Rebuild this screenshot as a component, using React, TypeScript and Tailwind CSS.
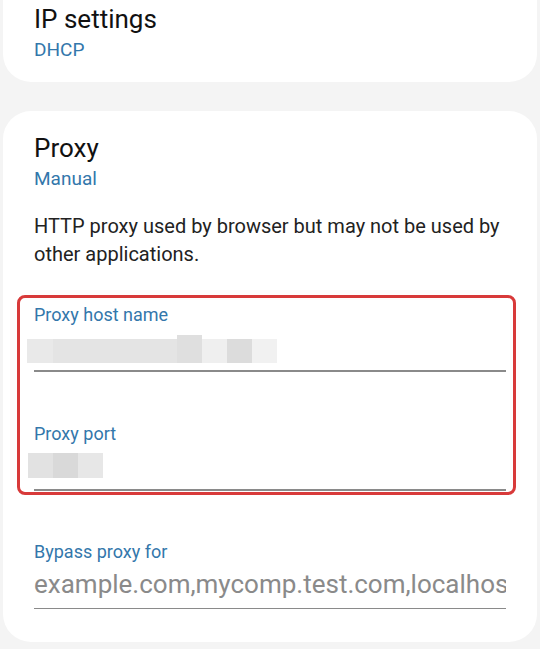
const hostCells = [
    'w-[25.5px] h-[24px] bg-[#e9e9e9]',
    'w-[124px] h-[24px] bg-[#e4e4e4]',
    'w-[25px] h-[28px] bg-[#dfdfdf]',
    'w-[25px] h-[24px] bg-[#efefef]',
    'w-[25px] h-[24px] bg-[#dcdcdc]',
    'w-[25px] h-[24px] bg-[#f1f1f1]',
];

const portCells = [
    'w-[25px] h-[25px] bg-[#e2e2e2]',
    'w-[25px] h-[25px] bg-[#d9d9d9]',
    'w-[25px] h-[25px] bg-[#e7e7e7]',
];

const FieldLabel = ({ children }: { children: string }) => (
    <div className="text-[18px] leading-[22px] text-[#3377ab]">{children}</div>
);

const Underline = () => <div className="h-[1.5px] bg-[#8a8a8a]" />;

const App = () => {
    return (
        <div className="min-h-screen overflow-hidden bg-[#f4f4f4] px-[3px] font-['Roboto','Noto_Sans',sans-serif]">
            {/* IP settings */}
            <div className="-mt-[28px] rounded-[28px] bg-white pl-[31px] pr-[31px] pt-[32px] pb-[20px]">
                <div className="text-[26px] leading-[30px] text-[#111]">IP settings</div>
                <div className="mt-[4px] text-[19px] leading-[24px] text-[#3377ab]">DHCP</div>
            </div>

            {/* Proxy */}
            <div className="mt-[29px] rounded-[28px] bg-white px-[31px] pt-[22px] pb-[33px]">
                <div className="text-[26px] leading-[30px] text-[#111]">Proxy</div>
                <div className="mt-[4px] text-[19px] leading-[24px] text-[#3377ab]">Manual</div>
                <p className="mt-[21px] text-[20px] leading-[28px] text-[#222]">
                    HTTP proxy used by browser but may not be used by other applications.
                </p>

                <div className="relative mt-[27px] pt-[8.5px] pb-[4px]">
                    <div className="pointer-events-none absolute inset-y-0 -left-[17px] -right-[10px] rounded-[8px] border-[3.5px] border-[#d83a3a]" />

                    <FieldLabel>Proxy host name</FieldLabel>
                    <div className="h-[44.5px] pt-[9.5px]">
                        <div className="-ml-[7px] flex items-end">
                            {hostCells.map((c, i) => (
                                <div key={i} className={c} />
                            ))}
                        </div>
                    </div>
                    <Underline />

                    <div className="mt-[51px]">
                        <FieldLabel>Proxy port</FieldLabel>
                        <div className="h-[44.5px] pt-[8px]">
                            <div className="-ml-[6px] flex">
                                {portCells.map((c, i) => (
                                    <div key={i} className={c} />
                                ))}
                            </div>
                        </div>
                        <Underline />
                    </div>
                </div>

                <div className="mt-[46px]">
                    <FieldLabel>Bypass proxy for</FieldLabel>
                    <div className="h-[45px] overflow-hidden whitespace-nowrap pt-[5px] text-[26px] leading-[32px] text-[#8a8a8a]">
                        example.com,mycomp.test.com,localhost
                    </div>
                    <Underline />
                </div>
            </div>
        </div>
    );
};

export default App;
